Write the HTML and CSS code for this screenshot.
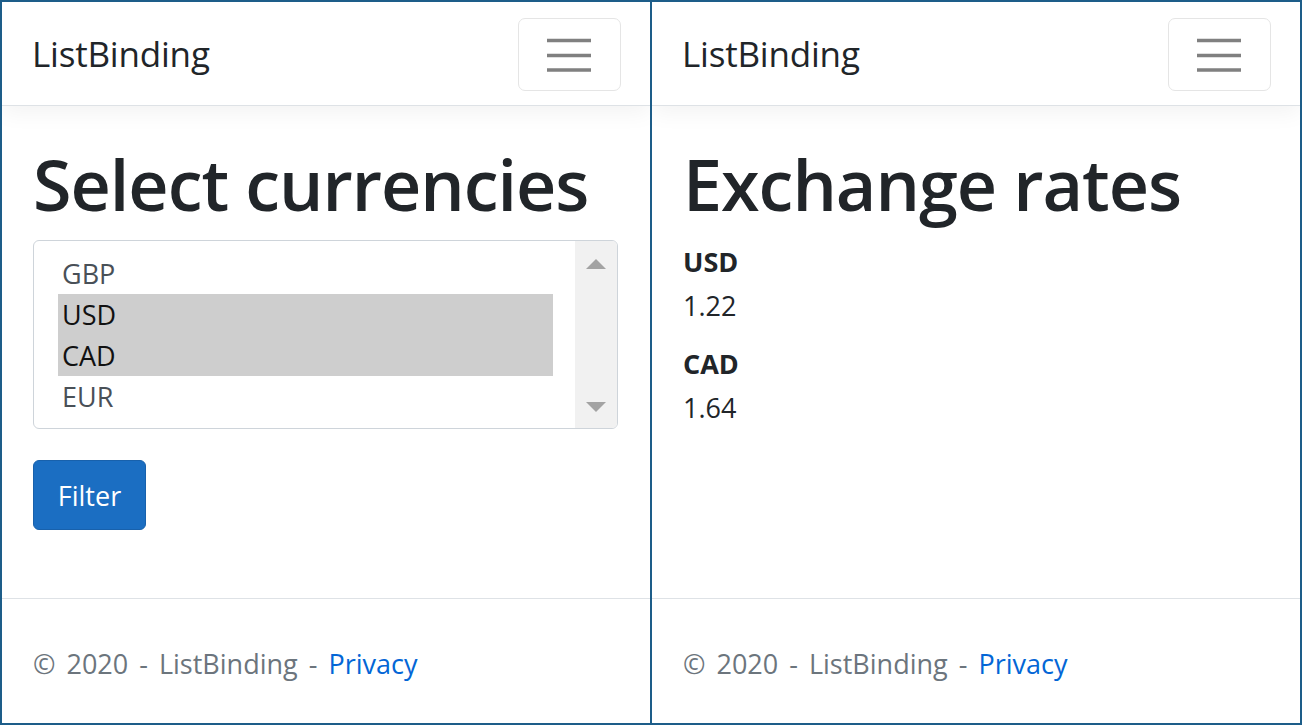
FILE: index.html
```html
<!DOCTYPE html>
<html lang="en">
<head>
<meta charset="utf-8">
<title>ListBinding</title>
<link rel="stylesheet" href="styles.css">
</head>
<body>
<div class="frame">
  <section class="panel">
    <header class="navbar">
      <a class="brand">ListBinding</a>
      <button class="toggler" aria-label="Toggle navigation">
        <svg class="toggler-icon" viewBox="0 0 44 34" width="44" height="34"><path d="M0 2.5h44M0 17.5h44M0 32h44" stroke="#808080" stroke-width="3.5"/></svg>
      </button>
    </header>
    <main class="content">
      <h1 class="title">Select currencies</h1>
      <div class="listbox">
        <div class="options">
          <div class="option">GBP</div>
          <div class="option selected">USD</div>
          <div class="option selected">CAD</div>
          <div class="option">EUR</div>
        </div>
        <div class="scrollbar">
          <span class="arrow up"></span>
          <span class="arrow down"></span>
        </div>
      </div>
      <button class="btn">Filter</button>
    </main>
    <footer class="footer">© 2020 - ListBinding - <a class="link">Privacy</a></footer>
  </section>
  <section class="panel">
    <header class="navbar">
      <a class="brand">ListBinding</a>
      <button class="toggler" aria-label="Toggle navigation">
        <svg class="toggler-icon" viewBox="0 0 44 34" width="44" height="34"><path d="M0 2.5h44M0 17.5h44M0 32h44" stroke="#808080" stroke-width="3.5"/></svg>
      </button>
    </header>
    <main class="content">
      <h1 class="title">Exchange rates</h1>
      <dl class="rates">
        <dt>USD</dt>
        <dd>1.22</dd>
        <dt>CAD</dt>
        <dd>1.64</dd>
      </dl>
    </main>
    <footer class="footer">© 2020 - ListBinding - <a class="link">Privacy</a></footer>
  </section>
</div>
</body>
</html>
```
FILE: styles.css
```css
* { box-sizing: border-box; }
html, body { margin: 0; padding: 0; }
body {
  background: #fff;
  font-family: "Open Sans", "Noto Sans", sans-serif;
  color: #212529;
  font-size: 27px;
  line-height: 42px;
}
.frame {
  width: 1302px;
  height: 725px;
  padding: 2px;
  background: #1d5d89;
  display: grid;
  grid-template-columns: 648px 648px;
  column-gap: 2px;
}
.panel {
  background: #fff;
  display: flex;
  flex-direction: column;
  overflow: hidden;
}
.navbar {
  height: 104px;
  flex: none;
  border-bottom: 1px solid #dee2e6;
  box-shadow: 0 7px 21px rgba(0, 0, 0, 0.05);
  display: flex;
  align-items: center;
  justify-content: space-between;
  padding: 0 29px 0 30px;
}
.brand {
  font-size: 35px;
  line-height: 42px;
  color: #212529;
  letter-spacing: -0.2px;
}
.toggler {
  width: 103px;
  height: 73px;
  border: 1.5px solid #e5e5e5;
  border-radius: 7px;
  background: #fff;
  display: flex;
  align-items: center;
  justify-content: center;
  padding: 0 2px 0 0;
  margin-top: 2px;
}
.toggler-icon { display: block; }
.content {
  padding: 0 31px;
  flex: none;
}
.title {
  margin: 36px 0 14px;
  font-size: 70px;
  line-height: 84px;
  font-weight: 600;
  letter-spacing: -1px;
  color: #212529;
}
.listbox {
  width: 585px;
  height: 189px;
  border: 1px solid #ced4da;
  border-radius: 6px;
  display: flex;
  overflow: hidden;
}
.options {
  flex: 1;
  padding: 12px 22px 0 24px;
}
.option {
  height: 41px;
  line-height: 41px;
  padding-left: 4px;
  color: #495057;
  font-size: 27px;
}
.option.selected {
  background: #cecece;
  color: #111;
}
.scrollbar {
  width: 42px;
  background: #f1f1f1;
  display: flex;
  flex-direction: column;
  justify-content: space-between;
  align-items: center;
  padding: 18px 0 16px;
}
.arrow {
  width: 0;
  height: 0;
  border-left: 10px solid transparent;
  border-right: 10px solid transparent;
}
.arrow.up { border-bottom: 10px solid #a3a3a3; }
.arrow.down { border-top: 10px solid #a3a3a3; }
.btn {
  margin-top: 31px;
  width: 113px;
  height: 70px;
  background: #1b6ec2;
  border: 1px solid #1861ac;
  border-radius: 6px;
  color: #fff;
  font-family: inherit;
  font-size: 27px;
  padding: 0;
}
.rates { margin: 0; }
.rates dt {
  font-weight: 700;
  line-height: 44px;
}
.rates dd {
  margin: 0 0 14px;
  line-height: 44px;
}
.footer {
  margin-top: auto;
  height: 125px;
  border-top: 1px solid #dee2e6;
  padding: 44px 31px 0;
  color: #6c757d;
  white-space: nowrap;
  line-height: 42px;
  word-spacing: 4px;
}
.link { color: #0366d6; word-spacing: 0; }
```
